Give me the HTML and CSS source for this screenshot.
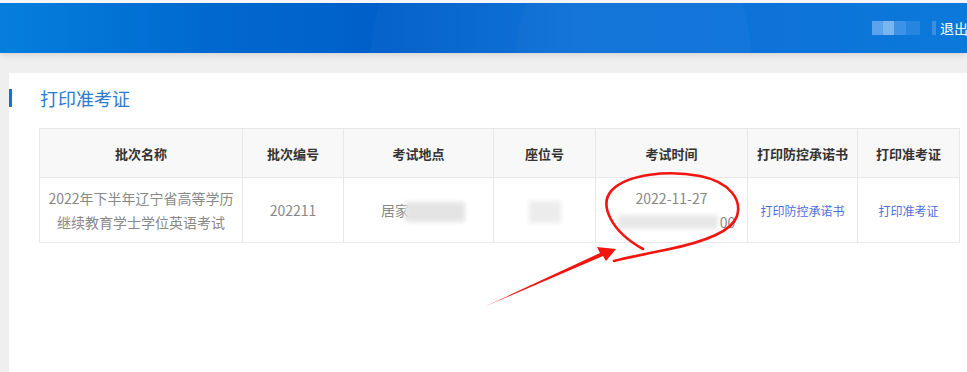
FILE: index.html
```html
<!DOCTYPE html>
<html lang="zh-CN">
<head>
    <meta charset="UTF-8">
    <title>打印准考证</title>
    <link rel="stylesheet" href="styles.css">
</head>
<body>
    <div class="topbar">
        <div class="user">
            <span class="user-name"></span>
            <span class="user-sep"></span>
            <a href="#" class="logout">退出</a>
        </div>
    </div>

    <div class="main">
        <div class="card">
            <h2 class="title">打印准考证</h2>

            <table class="exam-table">
                <colgroup>
                    <col style="width: 203px">
                    <col style="width: 101px">
                    <col style="width: 150px">
                    <col style="width: 102px">
                    <col style="width: 152px">
                    <col style="width: 110px">
                    <col style="width: 102px">
                </colgroup>
                <thead>
                    <tr>
                        <th>批次名称</th>
                        <th>批次编号</th>
                        <th>考试地点</th>
                        <th>座位号</th>
                        <th>考试时间</th>
                        <th>打印防控承诺书</th>
                        <th>打印准考证</th>
                    </tr>
                </thead>
                <tbody>
                    <tr>
                        <td class="name">2022年下半年辽宁省高等学历<br>继续教育学士学位英语考试</td>
                        <td>202211</td>
                        <td class="place">居家<span class="blur blur-place"></span></td>
                        <td><span class="blur blur-seat"></span></td>
                        <td class="time">
                            <div>2022-11-27</div>
                            <div class="time-line"><span class="blur blur-time"></span><span class="time-end">00</span></div>
                        </td>
                        <td><a href="#" class="link">打印防控承诺书</a></td>
                        <td><a href="#" class="link">打印准考证</a></td>
                    </tr>
                </tbody>
            </table>
        </div>
    </div>

    <svg class="marks" width="967" height="372" viewBox="0 0 967 372">
        <path d="M643 249 C 612 232, 598 205, 612 190 C 628 174, 668 170, 700 176 C 730 182, 742 200, 737 216 C 732 232, 700 243, 665 250 C 645 254, 625 258, 614 261"
              fill="none" stroke="#f2140f" stroke-width="2.6" stroke-linecap="round"/>
        <path d="M484 307 L 600 253 L 597 247 L 616 249 L 606 261 L 603 256 Z" fill="#f2140f"/>
    </svg>
</body>
</html>
```

FILE: styles.css
```css
* { margin: 0; padding: 0; box-sizing: border-box; }
body {
    font-family: "Noto Sans CJK SC", "Noto Sans", sans-serif;
    background: #efefef;
    width: 967px;
    height: 372px;
    overflow: hidden;
    position: relative;
    border-top: 3px solid #f4f6f9;
}
.topbar {
    height: 50px;
    background:
        radial-gradient(circle at 58% 120%, rgba(255, 255, 255, 0.025) 0 190px, transparent 191px),
        radial-gradient(circle at 78% 150%, rgba(255, 255, 255, 0.02) 0 240px, transparent 241px),
        linear-gradient(90deg, #057fdd 0%, #0068cf 22%, #005fca 40%, #0a6fd6 60%, #0870d8 80%, #0676d9 100%);
    box-shadow: 0 2px 6px rgba(0, 0, 0, 0.12);
    display: flex;
    justify-content: flex-end;
    align-items: center;
    overflow: hidden;
}
.user { display: flex; align-items: center; white-space: nowrap; margin-right: -1px; }
.user-name {
    width: 48px;
    height: 14px;
    background: linear-gradient(90deg, #5ba3ec 0 22%, #78b6f0 22% 45%, #3c92e6 45% 70%, #2585e0 70% 100%);
    margin-right: 12px;
}
.user-sep { width: 4px; height: 14px; background: #3a8fe4; margin-right: 4px; }
.logout { color: #fff; font-size: 14px; text-decoration: none; }
.main { padding: 20px 0 0 9px; }
.card {
    background: #fff;
    min-height: 320px;
    padding: 16px 0 0 0;
}
.title {
    border-left: 3px solid #0a74da;
    padding-left: 28px;
    font-size: 18px;
    font-weight: normal;
    color: #2a7ad2;
    line-height: 18px;
    height: 18px;
}
.exam-table {
    margin: 21px 0 0 30px;
    width: 920px;
    border-collapse: collapse;
    table-layout: fixed;
}
.exam-table th, .exam-table td {
    border: 1px solid #e8e8e8;
    text-align: center;
    vertical-align: middle;
}
.exam-table th {
    height: 49px;
    background: #f8f8f8;
    font-size: 13px;
    font-weight: bold;
    color: #333;
}
.exam-table td {
    height: 65px;
    font-size: 14px;
    color: #888;
    line-height: 24px;
}
.exam-table td.place { text-align: left; padding-left: 37px; }
.blur {
    display: inline-block;
    vertical-align: middle;
    background: #e4e4e4;
    filter: blur(2px);
}
.blur-place { width: 60px; height: 20px; margin-left: -4px; }
.blur-seat { width: 32px; height: 22px; background: #ececec; }
.time-line { display: flex; justify-content: center; align-items: center; padding-left: 10px; }
.blur-time { width: 100px; height: 14px; background: #e8e8e8; }
.time-end { margin-left: 2px; }
.link { font-size: 12px; color: #4b6fe0; text-decoration: none; }
.marks { position: absolute; left: 0; top: -3px; pointer-events: none; }
```
